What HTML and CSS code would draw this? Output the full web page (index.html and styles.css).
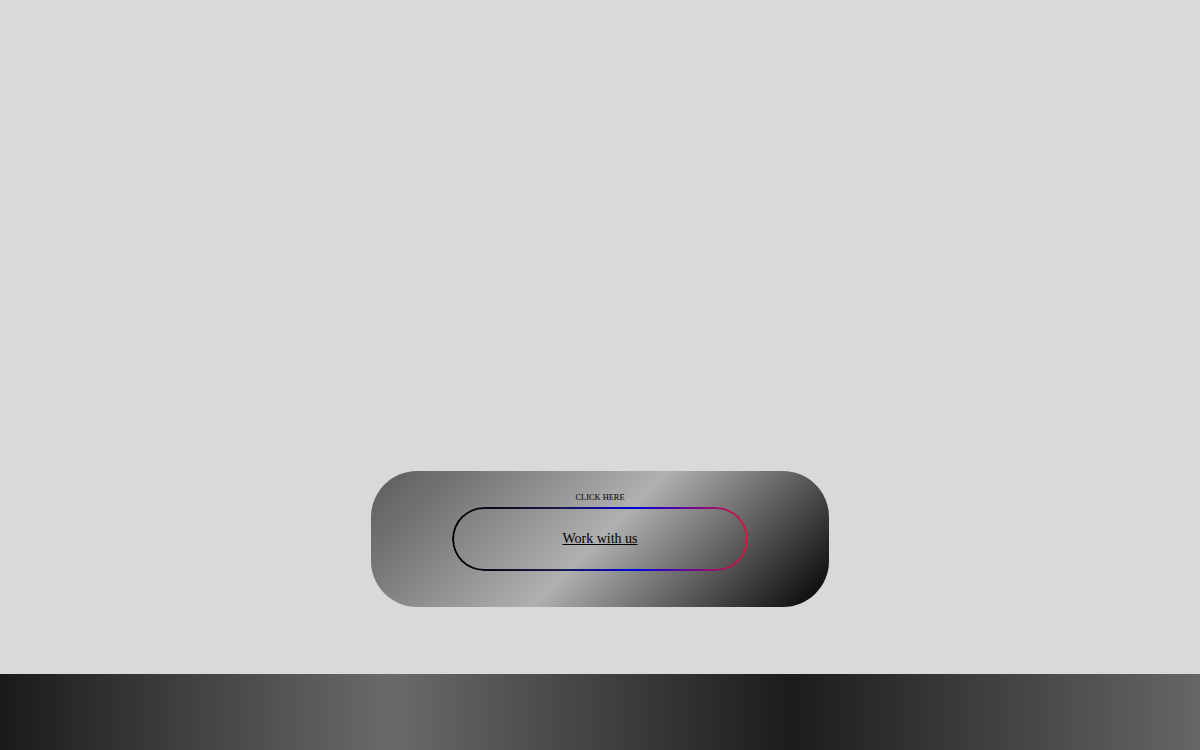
FILE: index.html
```html
<!DOCTYPE html>
<html>
<head>
    <title>Work with us</title>
    <meta name="viewport" content="width=device-width, initial-scale=1.0">
    <link rel="stylesheet" href="styles.css">
</head>
<body>
    <main class="stage">
        <div class="cta-card">
            <span class="cta-label">Click here</span>
            <a class="cta-btn" href="#">Work with us</a>
        </div>
    </main>
    <footer class="site-footer"></footer>
</body>
</html>
```

FILE: styles.css
```css
:root {
    --bg-color: #d9d9d9;
    --text-color: #000000;
}
body {
    font-family: 'Liberation Serif', 'Times New Roman', serif;
    background-color: var(--bg-color);
    color: var(--text-color);
    margin: 0;
}
.stage {
    box-sizing: border-box;
    height: 674px;
    display: flex;
    justify-content: center;
    align-items: flex-end;
    padding-bottom: 67px;
}
.cta-card {
    box-sizing: border-box;
    width: 458px;
    height: 136px;
    padding: 22px 0 36px;
    border-radius: 46px;
    background: linear-gradient(135deg, #5a5a5a 0%, #b0b0b0 50%, #000000 100%);
    display: flex;
    flex-direction: column;
    align-items: center;
    gap: 4px;
}
.cta-label {
    font-size: 8.4px;
    line-height: 10px;
    text-transform: uppercase;
}
.cta-btn {
    position: relative;
    box-sizing: border-box;
    width: 296px;
    height: 64px;
    border-radius: 32px;
    display: flex;
    justify-content: center;
    align-items: center;
    color: var(--text-color);
    font-size: 14px;
    text-decoration: underline;
}
/* gradient outline, content area masked out */
.cta-btn::before {
    content: "";
    position: absolute;
    inset: 0;
    padding: 2px;
    border-radius: inherit;
    background: linear-gradient(90deg, #000000 0%, #1a1a4a 35%, #0000e0 62%, #dc143c 100%);
    -webkit-mask: linear-gradient(#000 0 0) content-box, linear-gradient(#000 0 0);
    -webkit-mask-composite: xor;
    mask-composite: exclude;
}
.site-footer {
    height: 76px;
    background: linear-gradient(90deg, #1a1a1a 0%, #6a6a6a 32.5%, #1c1c1c 66%, #666666 100%);
}
```
